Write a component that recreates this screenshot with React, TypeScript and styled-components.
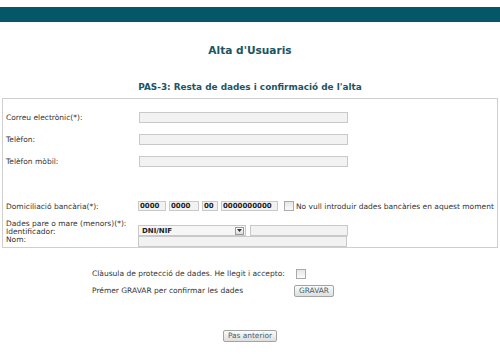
import React from "react";
import styled, { createGlobalStyle } from "styled-components";

const GlobalStyle = createGlobalStyle`
  html, body {
    margin: 0;
    padding: 0;
    background: #ffffff;
  }
  body {
    font-family: "DejaVu Sans", Verdana, sans-serif;
    font-size: 7.5px;
    color: #333333;
  }
`;

const App: React.FC = () => {
  return (
    <Page>
      <GlobalStyle />
      <TopBar />
      <Title>Alta d'Usuaris</Title>
      <SubTitle>PAS-3: Resta de dades i confirmació de l'alta</SubTitle>

      <FormBox>
        <FieldRow>
          <Label>Correu electrònic(*):</Label>
          <TextInput />
        </FieldRow>
        <FieldRow>
          <Label>Telèfon:</Label>
          <TextInput />
        </FieldRow>
        <FieldRow>
          <Label>Telèfon mòbil:</Label>
          <TextInput />
        </FieldRow>

        <Spacer />

        <FieldRow>
          <Label>Domiciliació bancària(*):</Label>
          <BankGroup>
            <BankInput $w={28}>0000</BankInput>
            <BankInput $w={30}>0000</BankInput>
            <BankInput $w={16}>00</BankInput>
            <BankInput $w={57}>0000000000</BankInput>
            <CheckBox $ml={3} />
            <CheckLabel>No vull introduir dades bancàries en aquest moment</CheckLabel>
          </BankGroup>
        </FieldRow>

        <ParentRow>
          <LabelStack>
            <span>Dades pare o mare (menors)(*):</span>
            <span>Identificador:</span>
            <span>Nom:</span>
          </LabelStack>
          <ParentFields>
            <SelectLine>
              <FakeSelect>
                <span>DNI/NIF</span>
                <SelectArrow>
                  <svg width="5" height="3" viewBox="0 0 5 3">
                    <path d="M0 0 L5 0 L2.5 3 Z" fill="#333" />
                  </svg>
                </SelectArrow>
              </FakeSelect>
              <TextInput $w={98} />
            </SelectLine>
            <TextInput />
          </ParentFields>
        </ParentRow>
      </FormBox>

      <ConfirmGrid>
        <span>Clàusula de protecció de dades. He llegit i accepto:</span>
        <CheckBox $ml={2} />
        <span>Prémer GRAVAR per confirmar les dades</span>
        <div>
          <Button>GRAVAR</Button>
        </div>
      </ConfirmGrid>

      <BottomBar>
        <Button>Pas anterior</Button>
      </BottomBar>
    </Page>
  );
};

const Page = styled.div`
  width: 500px;
  height: 354px;
  padding-top: 7px;
  box-sizing: border-box;
  overflow: hidden;
`;

const TopBar = styled.div`
  height: 15px;
  background-color: #035767;
`;

const Title = styled.h1`
  margin: 21px 0 0;
  text-align: center;
  font-size: 10.6px;
  line-height: 14px;
  font-weight: bold;
  color: #1c5565;
`;

const SubTitle = styled.h2`
  margin: 24px 0 0;
  text-align: center;
  font-size: 8.9px;
  line-height: 12px;
  font-weight: bold;
  color: #1c5565;
`;

const FormBox = styled.div`
  margin: 5px 2px 0;
  height: 150px;
  box-sizing: border-box;
  border: 1px solid #cfcfcf;
  padding: 7px 3px 0;
`;

const FieldRow = styled.div`
  display: grid;
  grid-template-columns: 133px 1fr;
  align-items: center;
  height: 22px;
`;

const Label = styled.span`
  white-space: nowrap;
`;

const Spacer = styled.div`
  height: 23px;
`;

const TextInput = styled.div<{ $w?: number }>`
  width: ${(p) => p.$w ?? 209}px;
  height: 11px;
  box-sizing: border-box;
  border: 1px solid #c9c9c9;
  background-color: #f2f2f2;
`;

const BankGroup = styled.div`
  display: flex;
  align-items: center;
  gap: 3px;
  margin-left: -1px;
`;

const BankInput = styled.div<{ $w: number }>`
  width: ${(p) => p.$w}px;
  height: 10px;
  box-sizing: border-box;
  border: 1px solid #c9c9c9;
  background-color: #f2f2f2;
  font-weight: bold;
  font-size: 7px;
  line-height: 8px;
  padding-left: 1px;
  color: #222222;
  overflow: hidden;
`;

const CheckBox = styled.div<{ $ml: number }>`
  width: 10px;
  height: 10px;
  box-sizing: border-box;
  margin-left: ${(p) => p.$ml}px;
  border: 1px solid #aaaaaa;
  background: linear-gradient(#e6e6e6, #fafafa);
`;

const CheckLabel = styled.span`
  white-space: nowrap;
  margin-left: -1px;
`;

const ParentRow = styled.div`
  display: grid;
  grid-template-columns: 132px 1fr;
  margin-top: 3px;
`;

const LabelStack = styled.div`
  display: flex;
  flex-direction: column;
  line-height: 8px;
  white-space: nowrap;
`;

const ParentFields = styled.div`
  display: flex;
  flex-direction: column;
  margin-top: 5px;
`;

const SelectLine = styled.div`
  display: flex;
  gap: 4px;
`;

const FakeSelect = styled.div`
  width: 108px;
  height: 11px;
  box-sizing: border-box;
  border: 1px solid #c9c9c9;
  background-color: #f6f6f6;
  display: flex;
  align-items: center;
  justify-content: space-between;
  padding: 0 1px 0 3px;
  font-weight: bold;
  font-size: 7px;
  color: #222222;
`;

const SelectArrow = styled.div`
  width: 9px;
  height: 8px;
  box-sizing: border-box;
  border: 1px solid #9a9a9a;
  background: linear-gradient(#fdfdfd, #dcdcdc);
  display: flex;
  align-items: center;
  justify-content: center;
`;

const ConfirmGrid = styled.div`
  display: grid;
  grid-template-columns: 202px auto;
  grid-auto-rows: 17px;
  align-items: center;
  justify-items: start;
  margin-top: 17px;
  padding-left: 92px;
`;

const Button = styled.button`
  height: 12px;
  padding: 0 4px;
  font-family: "DejaVu Sans", Verdana, sans-serif;
  font-size: 7.4px;
  line-height: 10px;
  color: #43606c;
  border: 1px solid #a3a3a3;
  border-radius: 2px;
  background: linear-gradient(#fbfbfb, #dedede);
`;

const BottomBar = styled.div`
  display: flex;
  justify-content: center;
  margin-top: 31px;
`;

export default App;
